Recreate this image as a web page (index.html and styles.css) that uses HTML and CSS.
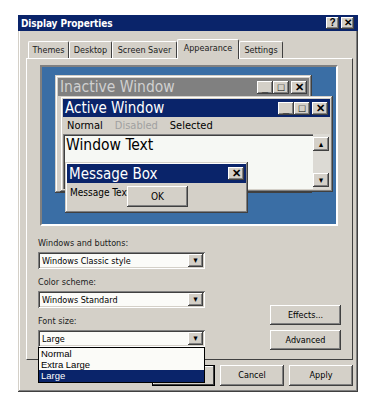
FILE: index.html
```html
<!DOCTYPE html>
<html lang="en">
<head>
  <meta charset="UTF-8">
  <title>Display Properties</title>
  <link rel="stylesheet" href="styles.css">
</head>
<body>

<div class="dialog">
  <div class="titlebar">
    <span class="title-text">Display Properties</span>
    <div class="title-buttons">
      <span class="tbtn">?</span>
      <span class="tbtn close">&#x2715;</span>
    </div>
  </div>

  <div class="tabs">
    <span class="tab">Themes</span>
    <span class="tab">Desktop</span>
    <span class="tab">Screen Saver</span>
    <span class="tab active">Appearance</span>
    <span class="tab">Settings</span>
  </div>

  <div class="panel">
    <div class="preview">
      <div class="win inactive-win">
        <div class="wtitle gray">
          <span>Inactive Window</span>
          <div class="wbtns">
            <span class="wbtn">_</span><span class="wbtn">&#9633;</span><span class="wbtn x">&#x2715;</span>
          </div>
        </div>
      </div>

      <div class="win active-win">
        <div class="wtitle navy">
          <span>Active Window</span>
          <div class="wbtns">
            <span class="wbtn">_</span><span class="wbtn">&#9633;</span><span class="wbtn x">&#x2715;</span>
          </div>
        </div>
        <div class="menu">
          <span>Normal</span>
          <span class="disabled">Disabled</span>
          <span>Selected</span>
        </div>
        <div class="textarea">
          <div class="wtext">Window Text</div>
          <div class="scroll">
            <span class="sarrow">&#9652;</span>
            <span class="sarrow">&#9662;</span>
          </div>
        </div>
      </div>

      <div class="win msgbox">
        <div class="wtitle navy msgtitle">
          <span>Message Box</span>
          <span class="wbtn x">&#x2715;</span>
        </div>
        <div class="msgbody">
          <span class="msgtext">Message Text</span>
          <span class="okbtn">OK</span>
        </div>
      </div>
    </div>

    <div class="controls">
      <div class="left-col">
        <div class="label">Windows and buttons:</div>
        <div class="select"><span>Windows Classic style</span><span class="arrow">&#9662;</span></div>

        <div class="label">Color scheme:</div>
        <div class="select"><span>Windows Standard</span><span class="arrow">&#9662;</span></div>

        <div class="label">Font size:</div>
        <div class="select dropped">
          <span>Large</span><span class="arrow">&#9662;</span>
          <div class="droplist">
            <div class="item">Normal</div>
            <div class="item">Extra Large</div>
            <div class="item sel">Large</div>
          </div>
        </div>
      </div>
      <div class="right-col">
        <span class="btn">Effects...</span>
        <span class="btn">Advanced</span>
      </div>
    </div>
  </div>

  <div class="footer">
    <span class="btn dbtn default">OK</span>
    <span class="btn dbtn">Cancel</span>
    <span class="btn dbtn">Apply</span>
  </div>
</div>

</body>
</html>
```

FILE: styles.css
```css
body {
  margin: 0;
  background-color: #ffffff;
  font-family: 'DejaVu Sans Condensed', 'DejaVu Sans', sans-serif;
  font-size: 9px;
  color: #000000;
}

.dialog {
  margin: 15px 0 0 18px;
  width: 340px;
  height: 377px;
  background-color: #d4d0c8;
  box-shadow: inset -1px -1px #404040, inset 1px 1px #d4d0c8, inset -2px -2px #808080, inset 2px 2px #ffffff;
  display: flex;
  flex-direction: column;
}

.titlebar {
  height: 16px;
  background-color: #0a246a;
  color: #ffffff;
  display: flex;
  justify-content: space-between;
  align-items: center;
  padding: 0 4px 0 3px;
}

.title-text {
  font-weight: bold;
  font-size: 10px;
  letter-spacing: -0.1px;
}

.title-buttons {
  display: flex;
  gap: 2px;
}

.tbtn {
  width: 13px;
  height: 12px;
  background-color: #d4d0c8;
  color: #000;
  font-family: 'Liberation Sans', sans-serif;
  font-weight: bold;
  font-size: 10px;
  line-height: 12px;
  text-align: center;
  box-shadow: inset -1px -1px #404040, inset 1px 1px #ffffff, inset -2px -2px #808080;
}

/* tabs */
.tabs {
  display: flex;
  align-items: flex-end;
  height: 20px;
  margin: 7px 0 0 10px;
}

.tab {
  box-sizing: border-box;
  height: 17px;
  line-height: 16px;
  text-align: center;
  white-space: nowrap;
  font-size: 9px;
  color: #202020;
  border-left: 1px solid #ffffff;
  border-top: 1px solid #ffffff;
  border-right: 1px solid #404040;
  border-radius: 2px 2px 0 0;
}

.tab:nth-child(1) { width: 41px; }
.tab:nth-child(2) { width: 43px; }
.tab:nth-child(3) { width: 65px; }
.tab:nth-child(4) { width: 62px; }
.tab:nth-child(5) { width: 44px; }

.tab.active {
  height: 20px;
  line-height: 16px;
  position: relative;
  top: 1px;
  background-color: #d4d0c8;
  z-index: 1;
}

/* tab panel */
.panel {
  margin-left: 8px;
  width: 325px;
  height: 300px;
  border-top: 1px solid #ffffff;
  border-left: 1px solid #ffffff;
  border-right: 1px solid #404040;
  border-bottom: 1px solid #404040;
  position: relative;
}

.preview {
  position: relative;
  margin: 6px 0 0 13px;
  width: 294px;
  height: 157px;
  background-color: #3a6ea5;
  border: 2px solid #a7a7a7;
  border-color: #808080 #ffffff #ffffff #808080;
}

.win {
  position: absolute;
  background-color: #d4d0c8;
  box-shadow: inset -1px -1px #404040, inset 1px 1px #d4d0c8, inset -2px -2px #808080, inset 2px 2px #ffffff;
  padding: 3px;
  box-sizing: border-box;
}

.inactive-win {
  left: 13px;
  top: 8px;
  width: 257px;
  height: 118px;
}

.active-win {
  left: 18px;
  top: 29px;
  width: 273px;
  height: 96px;
}

.msgbox {
  left: 23px;
  top: 95px;
  width: 183px;
  height: 51px;
  padding: 2px;
}

.wtitle {
  height: 18px;
  display: flex;
  justify-content: space-between;
  align-items: center;
  padding: 0 2px 0 2px;
  font-size: 15px;
}

.wtitle.gray {
  background-color: #808080;
  color: #d0d0d0;
  font-size: 15.5px;
}

.wtitle.navy {
  background-color: #0a246a;
  color: #ffffff;
}

.msgtitle {
  height: 19px;
}

.wbtns {
  display: flex;
}

.wbtn {
  width: 16px;
  height: 13px;
  background-color: #d4d0c8;
  color: #000;
  font-family: 'Liberation Sans', sans-serif;
  font-weight: bold;
  font-size: 11px;
  line-height: 13px;
  text-align: center;
  box-shadow: inset -1px -1px #404040, inset 1px 1px #ffffff, inset -2px -2px #808080;
}

.wbtn.x {
  margin-left: 2px;
}

.menu {
  display: flex;
  gap: 12px;
  padding: 1px 0 0 4px;
  height: 16px;
  font-size: 11px;
  line-height: 15px;
}

.menu .disabled {
  color: #a0a0a0;
}

.textarea {
  display: flex;
  height: 55px;
  background-color: #f6f8f4;
  box-shadow: inset 1px 1px #808080, inset 2px 2px #404040;
}

.wtext {
  flex: 1;
  font-size: 15.5px;
  padding: 2px 0 0 3px;
}

.scroll {
  width: 17px;
  background-color: #dcdad4;
  display: flex;
  flex-direction: column;
  justify-content: space-between;
  padding: 3px 0 2px 0;
}

.sarrow {
  height: 14px;
  width: 16px;
  background-color: #d4d0c8;
  font-size: 9px;
  line-height: 14px;
  text-align: center;
  box-shadow: inset -1px -1px #404040, inset 1px 1px #ffffff, inset -2px -2px #808080;
}

.msgbody {
  position: relative;
  padding: 4px 0 0 3px;
  font-size: 10px;
}

.okbtn {
  position: absolute;
  left: 60px;
  top: 3px;
  width: 61px;
  height: 21px;
  line-height: 21px;
  text-align: center;
  font-size: 10px;
  background-color: #d4d0c8;
  box-shadow: inset -1px -1px #404040, inset 1px 1px #ffffff, inset -2px -2px #808080;
}

/* lower controls */
.controls {
  display: flex;
  justify-content: space-between;
  padding: 11px 11px 0 11px;
}

.left-col {
  width: 167px;
}

.label {
  font-size: 9px;
  color: #202020;
  height: 13px;
  line-height: 13px;
  margin-bottom: 2px;
}

.select {
  position: relative;
  height: 17px;
  background-color: #fbfbf8;
  box-shadow: inset 1px 1px #808080, inset -1px -1px #ffffff, inset 2px 2px #404040, inset -2px -2px #d4d0c8;
  display: flex;
  justify-content: space-between;
  align-items: center;
  padding: 0 2px 0 4px;
  margin-bottom: 7px;
  font-size: 9px;
}

.arrow {
  width: 15px;
  height: 13px;
  background-color: #d4d0c8;
  font-size: 9px;
  line-height: 13px;
  text-align: center;
  box-shadow: inset -1px -1px #404040, inset 1px 1px #ffffff, inset -2px -2px #808080;
}

.droplist {
  position: absolute;
  left: 0;
  top: 17px;
  width: 165px;
  background-color: #fbfbf8;
  border: 1px solid #000000;
  z-index: 5;
}

.item {
  height: 11px;
  line-height: 11px;
  padding: 0 2px;
  font-family: 'Liberation Sans', sans-serif;
  font-size: 9.5px;
}

.item.sel {
  background-color: #0a246a;
  color: #ffffff;
  height: 12px;
}

.right-col {
  display: flex;
  flex-direction: column;
  gap: 5px;
  padding-top: 68px;
}

.btn {
  width: 71px;
  height: 20px;
  line-height: 20px;
  text-align: center;
  font-size: 9px;
  background-color: #d4d0c8;
  box-shadow: inset -1px -1px #404040, inset 1px 1px #ffffff, inset -2px -2px #808080;
}

/* dialog buttons */
.footer {
  display: flex;
  justify-content: flex-end;
  gap: 5px;
  padding: 5px 5px 0 0;
}

.dbtn {
  width: 64px;
  height: 21px;
  line-height: 21px;
}

.dbtn.default {
  width: 63px;
  box-shadow: inset 0 0 0 1px #000000, inset -2px -2px #404040, inset 2px 2px #ffffff;
}
```
